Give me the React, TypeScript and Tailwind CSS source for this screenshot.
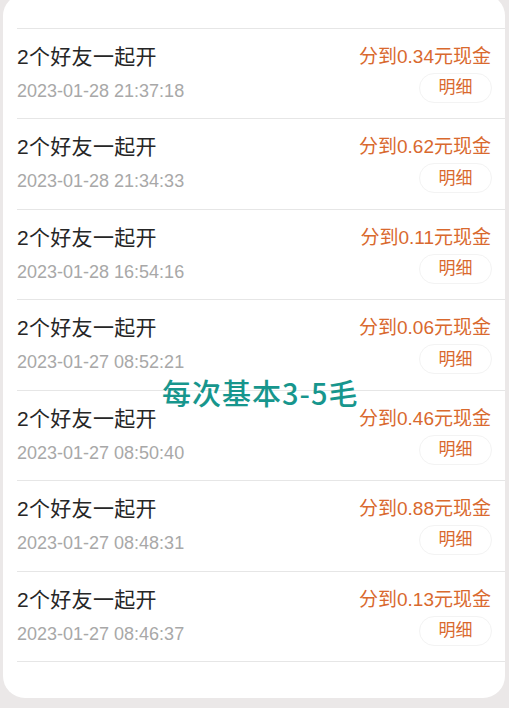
import React from "react";

const rows = [
  { date: "2023-01-28 21:37:18", amt: "0.34" },
  { date: "2023-01-28 21:34:33", amt: "0.62" },
  { date: "2023-01-28 16:54:16", amt: "0.11" },
  { date: "2023-01-27 08:52:21", amt: "0.06" },
  { date: "2023-01-27 08:50:40", amt: "0.46" },
  { date: "2023-01-27 08:48:31", amt: "0.88" },
  { date: "2023-01-27 08:46:37", amt: "0.13" },
];

const font = {
  fontFamily: '"Liberation Sans", "Noto Sans CJK SC", sans-serif',
};

export default function App() {
  return (
    <div className="relative w-[509px] h-[708px] overflow-hidden bg-[#ebe8e8]" style={font}>
      <div className="ml-[3px] w-[502px] mt-[-6px] bg-white rounded-[22px] pt-[34px] pb-[36px]">
        <div className="ml-[14px] border-t border-[#e6e6e6]">
          {rows.map((r, i) => (
            <div
              key={i}
              className="h-[90.43px] border-b border-[#e6e6e6] flex justify-between pr-[14px] box-border"
            >
              <div className="flex flex-col">
                <div className="pt-[14px] text-[21px] leading-[28px] tracking-[0.3px] text-[#262626]">2个好友一起开</div>
                <div className="mt-[8px] text-[18px] leading-[24px] text-[#a8a8a8]">{r.date}</div>
              </div>
              <div className="flex flex-col items-end">
                <div className="pt-[14px] text-[19px] leading-[28px] text-[#d9692e]">
                  分到{r.amt}元现金
                </div>
                <div className="mt-[2px] mr-[-1px] w-[73px] h-[30px] rounded-full border border-[#f3f3f3] flex items-center justify-center text-[17px] text-[#d9692e]">
                  明细
                </div>
              </div>
            </div>
          ))}
        </div>
      </div>
      <div
        className="absolute left-[162px] top-[375px] text-[29px] leading-[34px] tracking-[1px] font-medium text-[#17968d] whitespace-nowrap"
        style={{ fontFamily: '"Noto Sans CJK SC", "Noto Sans", sans-serif' }}
      >
        每次基本3-5毛
      </div>
    </div>
  );
}
